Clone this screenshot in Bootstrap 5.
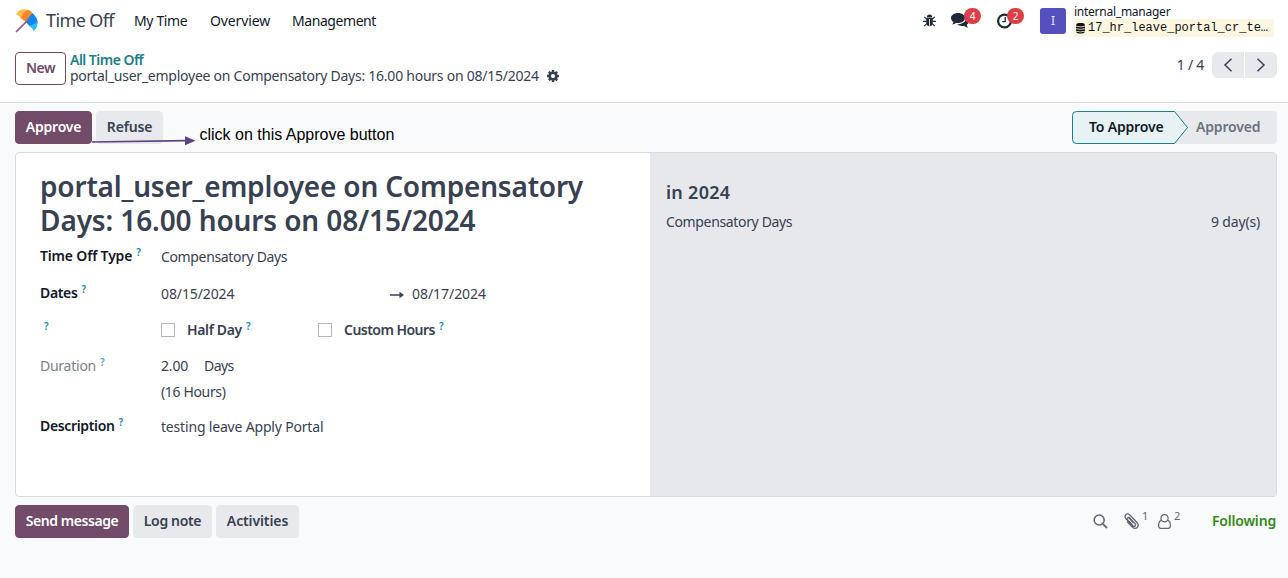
<!DOCTYPE html>
<html lang="en">
<head>
<meta charset="utf-8">
<title>Time Off</title>
<link href="https://cdn.jsdelivr.net/npm/bootstrap@5.3.0/dist/css/bootstrap.min.css" rel="stylesheet">
<style>
body{font-family:"Noto Sans","Open Sans",sans-serif;font-size:14px;line-height:21px;color:#374151;background:#f9fafb;height:578px;overflow:hidden;white-space:nowrap}
.ls-05{letter-spacing:-.05px}.ls-1{letter-spacing:-.11px}.ls-2{letter-spacing:-.18px}.ls-25{letter-spacing:-.25px}.ls-3{letter-spacing:-.35px}.ls-4{letter-spacing:-.43px}.ls-5{letter-spacing:-.53px}.ls-6{letter-spacing:-.6px}
svg{display:block;flex:none}
.med{font-weight:600}
.ink{color:#111827}
.topbar{height:46px;padding:0 14px 5px 15px;background:#fff}
.topbar .brand-name{font-size:18px;margin-left:7px;width:88px}
.menu-item{color:#111827;text-decoration:none}
.count{position:absolute;top:-5px;width:17px;height:16px;border-radius:8px;background:#dc3f47;color:#fff;font-size:10px;line-height:16px;text-align:center}
.avatar{width:26px;height:26px;border-radius:3px;background:#5450bd;color:#e8e8ff;font-size:12px;line-height:26px}
.user-name{font-size:12px;line-height:15px}
.db-name{font:12px/18px "Liberation Mono",monospace;background:#fcf6e1;width:200px;height:18px;padding:1px 0 0 2px;color:#111}
.panel{height:57px;padding:0 11px 11px 15px;background:#fff;border-bottom:1px solid #d8dadd}
.btn{--bs-btn-font-size:14px;--bs-btn-line-height:21px;--bs-btn-padding-x:8px;--bs-btn-border-radius:4px;--bs-btn-font-weight:600;height:33px;padding-top:4px;padding-bottom:6px}
.btn-brand{--bs-btn-bg:#714b67;--bs-btn-color:#fff;--bs-btn-border-color:#714b67}
.btn-soft{--bs-btn-bg:#e7e9ed;--bs-btn-color:#374151;--bs-btn-border-color:#e7e9ed}
.btn-line{--bs-btn-bg:#fff;--bs-btn-color:#714b67;--bs-btn-border-color:#714b67}
.crumbs{line-height:16px;margin:-2px 0 0 4px}
.crumbs a{color:#1b8087;text-decoration:none}
.pager{width:32px;height:26px;background:#e7e9ed}
.actions{height:49px;padding:0 11px 0 15px}
.note{position:absolute;left:92px;top:24px;color:#000}
.note span{font:16px/18px "Liberation Sans",sans-serif}
.steps{position:relative;width:205px;height:33px;background:#e7e9ed;border-radius:4px}
.steps svg{position:absolute;left:0;top:0}
.steps div{position:relative;line-height:32px}
.sheet{height:345px;margin:0 11px 0 15px;border:1px solid #d8dadd;border-radius:4px;background:#fff;overflow:hidden}
.form-side{width:634px;padding:16px 24px 0}
.form-side h1{font-size:28px;line-height:34px;font-weight:600;margin:0 0 1px;color:#374151}
.balance{background:#e7e8ec;padding:28px 16px 0 16px}
.balance h2{font-size:18px;line-height:22px;font-weight:600;margin:0 0 8px;letter-spacing:.28px}
.f-label{width:121px}
.tip{color:#0e8ab0;font-size:10px;line-height:10px;font-weight:600;position:relative;top:-5px;margin-left:4px;letter-spacing:0}
.box{width:14px;height:14px;border:1px solid #b5b7bb;background:#fff}
.chatter{padding:8px 12px 0 15px;color:#5f6773}
.chatter sup{font-size:11px;line-height:12px;top:-6px}
.following{color:#388a18}
</style>
</head>
<body>
<nav class="topbar d-flex align-items-center">
  <svg width="24" height="24" viewBox="0 0 24 24"><path d="M1 5.500C3.500 0 8.500-.8 13.500 1L6.500 9.800Q4 6 1 5.500Z" fill="#ffbd4a"/><path d="M5.500 9Q8 3.500 13 .8Q16 2 17.500 4.500L11 13Z" fill="#fc8626"/><path d="M17.300 4Q22.500 8.500 22.700 14L15 17.500L10.500 12.800Z" fill="#0c86f4"/><path d="M22.700 12.500Q23 18 18.800 22Q17.500 19 14.500 17Q19.500 15.500 22.700 12.500Z" fill="#2ebcfa"/><path d="M1.500 22.500L11.500 12.500" stroke="#985184" stroke-width="1.700" fill="none" stroke-linecap="round"/></svg>
  <span class="brand-name ls-6">Time Off</span>
  <a class="menu-item ls-3" style="width:76px" href="#">My Time</a>
  <a class="menu-item ls-1" style="width:82px" href="#">Overview</a>
  <a class="menu-item ls-4" href="#">Management</a>
  <div class="d-flex align-items-center ms-auto">
    <svg width="13" height="13" viewBox="0 0 13 13" fill="#1f2937" stroke="#1f2937"><path d="M3.800 3.500a2.700 3 0 0 1 5.400 0z" stroke="none"/><path d="M3.200 4h6.600v4.500a3.300 3.800 0 0 1-6.600 0z" stroke="none"/><path d="M3.500 5L1.300 2.800M9.500 5l2.200-2.200M3.500 7.400H0M9.500 7.400H13M3.700 9.500l-2.400 2.600M9.300 9.500l2.400 2.600" fill="none" stroke-width="1.100"/><path d="M6.500 5v7" stroke="#fff" stroke-width=".8"/></svg>
    <div class="position-relative" style="margin-left:15px">
      <svg width="18" height="15" viewBox="0 0 18 15" fill="#1f2937"><path d="M7 0c3.900 0 7 2.200 7 5s-3.100 5-7 5c-.7 0-1.300-.1-1.900-.2C4 10.700 2.600 11.400 1 11.500c.8-.8 1.300-1.500 1.500-2.600C1 8 0 6.600 0 5c0-2.800 3.100-5 7-5z"/><path d="M15 4c1.800.9 3 2.200 3 4 0 1.500-.9 2.800-2.300 3.700.2 1.100.7 1.900 1.500 2.700-1.600-.1-3-.8-4.100-1.700-2.700.5-5.300 0-6.900-1.500C11 11.300 15 8.700 15 5.400z"/></svg>
      <span class="count" style="left:13px">4</span>
    </div>
    <div class="position-relative" style="margin-left:28px">
      <svg width="16" height="16" viewBox="0 0 16 16" fill="none" stroke="#1f2937"><circle cx="7.500" cy="8" r="6.400" stroke-width="2.200"/><path d="M8.200 4v4.600H5.200" stroke-width="1.300"/></svg>
      <span class="count" style="left:10px">2</span>
    </div>
    <div class="avatar text-center" style="margin:0 8px 0 27px">I</div>
    <div style="margin-top:-1px">
      <div class="user-name ls-25 ink">internal_manager</div>
      <div class="db-name d-flex align-items-center"><svg width="9" height="11" viewBox="0 0 9 11" style="margin-right:3px"><rect width="9" height="10.500" rx="3" fill="#111"/><path d="M0 3.200q4.500 1.400 9 0M0 5.700q4.500 1.400 9 0M0 8.200q4.500 1.400 9 0" stroke="#fcf6e1" stroke-width=".8" fill="none"/></svg>17_hr_leave_portal_cr_te…</div>
    </div>
  </div>
</nav>

<div class="panel d-flex align-items-center">
  <button class="btn btn-line ls-5" style="width:51px">New</button>
  <div class="crumbs">
    <a class="med ls-5 d-block" href="#">All Time Off</a>
    <div class="d-flex align-items-center"><span class="ls-25">portal_user_employee on Compensatory Days: 16.00 hours on 08/15/2024</span>
      <svg class="ms-2" width="12" height="12" viewBox="0 -128 1536 1536" fill="#374151"><path d="M1024 640q0-106-75-181t-181-75-181 75-75 181 75 181 181 75 181-75 75-181zm512-109v222q0 12-8 23t-20 13l-185 28q-19 54-39 91 35 50 107 138 10 12 10 25t-9 23q-27 37-99 108t-94 71q-12 0-26-9l-138-108q-44 23-91 38-16 136-29 186-7 28-36 28h-222q-14 0-24.500-8.500t-11.500-21.500l-28-184q-49-16-90-37l-141 107q-10 9-25 9-14 0-25-11-126-114-165-168-7-10-7-23 0-12 8-23 15-21 51-66.500t54-70.500q-27-50-41-99l-183-27q-13-2-21-12.500t-8-23.500v-222q0-12 8-23t19-13l186-28q14-46 39-92-40-57-107-138-10-12-10-24 0-10 9-23 26-36 98.500-107.500t94.500-71.500q13 0 26 10l138 107q44-23 91-38 16-136 29-186 7-28 36-28h222q14 0 24.500 8.500t11.500 21.500l28 184q49 16 90 37l142-107q9-9 24-9 13 0 25 10 129 119 165 170 7 8 7 22 0 12-8 23-15 21-51 66.500t-54 70.500q26 50 41 98l183 28q13 2 21 12.500t8 23.500z"/></svg></div>
  </div>
  <div class="d-flex align-items-center ms-auto" style="margin-top:-8px">
    <span class="ls-25" style="margin-right:8px">1 / 4</span>
    <div class="pager rounded-start d-flex align-items-center justify-content-center" style="margin-right:1px"><svg width="10" height="14" viewBox="0 0 10 14" fill="none" stroke="#374151" stroke-width="1.500"><path d="M8.500 .8L2 7l6.500 6.200"/></svg></div>
    <div class="pager rounded-end d-flex align-items-center justify-content-center"><svg width="10" height="14" viewBox="0 0 10 14" fill="none" stroke="#374151" stroke-width="1.500"><path d="M1.500 .8L8 7l-6.500 6.200"/></svg></div>
  </div>
</div>

<div class="actions position-relative d-flex align-items-center">
  <button class="btn btn-brand ls-2 me-1" style="width:77px">Approve</button>
  <button class="btn btn-soft ls-2" style="width:67px">Refuse</button>
  <div class="note d-flex">
    <svg width="104" height="22" viewBox="0 0 104 22"><path d="M0 15L94 13.700" stroke="#5d4384" stroke-width="1.700"/><path d="M93 9.300L103.500 13.800L93 18.200z" fill="#5d4384"/></svg>
    <span style="margin:-1px 0 0 3.500px">click on this Approve button</span>
  </div>
  <div class="steps d-flex med ms-auto">
    <svg width="117" height="33" viewBox="0 0 117 33"><path d="M4.500 .5H102.500L115.500 16.500L102.500 32.500H4.500a4 4 0 0 1-4-4v-24a4 4 0 0 1 4-4z" fill="#e6f2f3" stroke="#1b8087"/></svg>
    <div class="ink ls-2" style="width:124px;padding-left:17px">To Approve</div>
    <div class="ls-2" style="color:#6b7280">Approved</div>
  </div>
</div>

<main class="sheet d-flex">
  <section class="form-side">
    <h1><span style="letter-spacing:-.19px">portal_user_employee on Compensatory</span><br><span style="letter-spacing:-.12px">Days: 16.00 hours on 08/15/2024</span></h1>
    <div class="d-flex" style="height:37px;padding-top:7px">
      <div class="f-label med ink ls-2">Time Off Type<span class="tip">?</span></div><div class="ls-3" style="padding-top:1px">Compensatory Days</div>
    </div>
    <div class="d-flex" style="height:37px;padding-top:7px">
      <div class="f-label med ink ls-3">Dates<span class="tip">?</span></div>
      <div class="ls-1" style="width:229px;padding-top:1px">08/15/2024</div>
      <svg width="14" height="8" viewBox="0 0 14 8" style="margin:9px 8px 0 0"><path d="M0 3.200h9.500V.7L14 4l-4.500 3.300V4.800H0z" fill="#374151"/></svg>
      <div class="ls-05" style="padding-top:1px">08/17/2024</div>
    </div>
    <div class="d-flex" style="height:36px;padding-top:7px">
      <div class="f-label"><span class="tip">?</span></div>
      <div class="d-flex" style="width:157px"><span class="box" style="margin:4px 12px 0 0"></span><span class="med ls-3">Half Day<span class="tip">?</span></span></div>
      <span class="box" style="margin:4px 12px 0 0"></span><span class="med ls-5">Custom Hours<span class="tip">?</span></span>
    </div>
    <div class="d-flex" style="height:26px;padding-top:7px">
      <div class="f-label ls-25" style="color:#7b808a">Duration<span class="tip opacity-75">?</span></div>
      <div class="ls-2" style="width:43px">2.00</div><div class="ls-5">Days</div>
    </div>
    <div class="ls-3" style="height:34px;padding:7px 0 0 121px">(16 Hours)</div>
    <div class="d-flex" style="padding-top:7px">
      <div class="f-label med ink ls-3">Description<span class="tip">?</span></div><div class="ls-2" style="padding-top:1px">testing leave Apply Portal</div>
    </div>
  </section>
  <aside class="balance flex-grow-1">
    <h2>in 2024</h2>
    <div class="d-flex justify-content-between"><span class="ls-3">Compensatory Days</span><span class="ls-2">9 day(s)</span></div>
  </aside>
</main>

<footer class="chatter d-flex align-items-center">
  <button class="btn btn-brand ls-4 me-1" style="width:114px">Send message</button>
  <button class="btn btn-soft ls-3 me-1" style="width:79px">Log note</button>
  <button class="btn btn-soft ls-1" style="width:83px">Activities</button>
  <div class="d-flex align-items-center ms-auto">
    <svg width="15" height="15" viewBox="0 0 15 15" fill="none" stroke="#5f6773" stroke-width="1.500"><circle cx="6.200" cy="6" r="5"/><path d="M9.800 9.800L14 14" stroke-width="1.800"/></svg>
    <svg width="16" height="17" viewBox="0 0 16 17" style="margin-left:15px" fill="none" stroke="#5f6773" stroke-width="1.250" stroke-linecap="round"><path d="M6 4.200L12.300 11a1.500 1.500 0 0 1-2.200 2L3.200 6C.2 2.700 4-.8 7 2.200L14 9.500c3.300 3.800-1.200 8-4.700 4.500L4.500 9"/><path d="M10.500 9.700L6.300 5.300C4.800 4 3.200 5.600 4.500 7L9 11.700"/></svg>
    <sup style="margin-left:3px;width:16px">1</sup>
    <svg width="13" height="15" viewBox="0 0 13 15" fill="none" stroke="#5f6773" stroke-width="1.200"><circle cx="6.500" cy="4.300" r="3.600"/><path d="M3.300 6.300C1.400 6.800.6 8.500.6 11.500c0 1.800.9 2.800 2.300 2.800h7.200c1.400 0 2.300-1 2.300-2.800 0-3-.8-4.700-2.700-5.200"/></svg>
    <sup style="margin-left:3px;width:38px">2</sup>
    <span class="following med ls-2" style="margin-top:-2px">Following</span>
  </div>
</footer>
<script src="https://cdn.jsdelivr.net/npm/bootstrap@5.3.0/dist/js/bootstrap.bundle.min.js"></script>
</body>
</html>
